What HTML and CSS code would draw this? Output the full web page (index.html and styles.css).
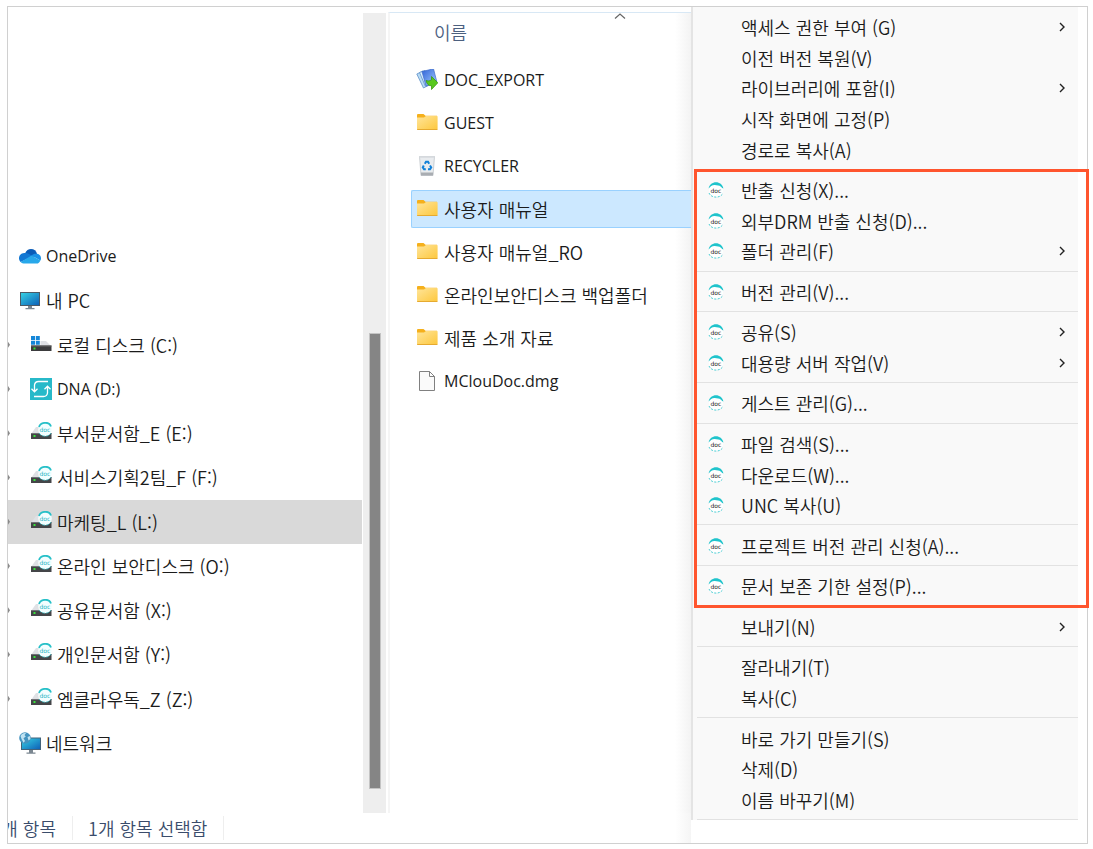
FILE: index.html
```
<!DOCTYPE html>
<html lang="ko">
<head>
    <meta charset="UTF-8">
    <meta name="viewport" content="width=device-width, initial-scale=1.0">
    <title>마케팅_L (L:)</title>
    <link rel="stylesheet" href="styles.css">
</head>
<body>
    <!-- Gradients shared by the icons -->
    <svg class="gradients" aria-hidden="true">
        <defs>
            <linearGradient id="g-screen" x1="0" y1="0" x2="1" y2="1">
                <stop offset="0" stop-color="#35d0e4"/><stop offset="1" stop-color="#0f62b8"/>
            </linearGradient>
            <linearGradient id="g-folder" x1="0" y1="0" x2="1" y2="1">
                <stop offset="0" stop-color="#ffe59a"/><stop offset="1" stop-color="#fdc73c"/>
            </linearGradient>
            <linearGradient id="g-export" x1="0" y1="0" x2="1" y2="1">
                <stop offset="0" stop-color="#2f62d8"/><stop offset="1" stop-color="#a9d0ff"/>
            </linearGradient>
        </defs>
    </svg>

    <!-- Icon set -->
    <svg class="sprite" aria-hidden="true">
        <symbol id="i-onedrive" viewBox="0 0 22 22">
            <path fill="#0a5cb8" d="M6 8.500C7.200 5.300 9.500 4 12 4c3 0 5.300 1.900 6 4.800L13 13z"/>
            <path fill="#1277d3" d="M5.500 8C2.300 8 0 10.300 0 13.200c0 1.500.6 2.800 1.600 3.800L14 11.300 9.500 8.700C8.300 8.100 7 8 5.500 8z"/>
            <path fill="#1a91e6" d="M12.500 10.500c1.500-1.500 3.300-2.100 5.500-1.700 2.400.3 4 2.200 4 4.400 0 .9-.2 1.600-.6 2.200z"/>
            <path fill="#28a8ea" d="M1.600 17c1 1 2.400 1.500 4 1.500h12c1.700 0 3-1 3.800-3.100l-8.900-4.900z"/>
        </symbol>
        <symbol id="i-pc" viewBox="0 0 22 22">
            <path fill="#4c5a66" d="M1 3h20v14H1z"/>
            <path fill="url(#g-screen)" d="M2 4h18v12H2z"/>
            <path fill="#7b8791" d="M9 17h4v2H9zM6.500 19h9v1.200h-9z"/>
        </symbol>
        <symbol id="i-disk" viewBox="0 1 22 22">
            <path fill="#dfe0e5" d="M3 8h13l5 5H1z"/>
            <path fill="#3b3b3d" d="M1 12.500h20.500V18H1z"/>
            <path fill="#666" d="M1 12.500h20.500v1H1z"/>
            <path fill="#35e03b" d="M3.500 14.500h2v2h-2z"/>
            <path fill="#fff" d="M0 2h10.500v10H0z"/>
            <path fill="#1586d8" d="M1 3h4v4H1zM5.800 3h4v4h-4zM1 7.800h4v4H1zM5.800 7.800h4v4h-4z"/>
        </symbol>
        <symbol id="i-dna" viewBox="0 0 22 22">
            <path fill="#27b9c9" d="M0 0h22v22H0z"/>
            <path fill="none" stroke="#fff" stroke-width="1.300" d="M18 3.500H8.500Q5 3.500 4.500 7v7M1.500 10.800l3 3 3-3M4 18.500h9.500q3.500 0 4-3.500V8M14.500 11.200l3-3 3 3"/>
        </symbol>
        <symbol id="i-drive" viewBox="0 1 22 22">
            <path fill="#dfe1e5" d="M6 6h10l5 7H1z"/>
            <path fill="#444548" d="M1 12h20.500v6H1z"/>
            <path fill="#717376" d="M1 12h20.500v1H1z"/>
            <path fill="#39e43c" d="M3.500 14h2v2h-2z"/>
            <circle cx="15" cy="8.500" r="6.800" fill="#f3feff"/>
            <path fill="none" stroke="#27c0c8" stroke-width="1.800" d="M9 6c1.500-5 10-6 12-.5"/>
            <path fill="none" stroke="#27c0c8" stroke-width=".7" stroke-dasharray="3 1" d="M9 12c2 4 10 4.500 12 0"/>
            <text class="badge" x="9.500" y="11" fill="#27b5c4">doc</text>
        </symbol>
        <symbol id="i-network" viewBox="0 0 22 22">
            <path fill="#42627a" d="M2 5.500h20V18H2z"/>
            <path fill="url(#g-screen)" d="M3 6.500h18V17H3z"/>
            <path fill="#7b8791" d="M10 18h4v2.500h-4zM7.500 20.500h9v1.200h-9z"/>
            <circle cx="6" cy="6" r="5.800" fill="#4493bf"/>
            <path fill="#bfe2f1" d="M1.500 4C3 1.500 5 .8 7 1.200L5.500 3l1.300 1.400-2.300 1.800L6 9l-1.500 1.800L2.500 7zM8.500 5l2.500-1 .5 3-2 1.500z"/>
        </symbol>
        <symbol id="i-export" viewBox="0 1 22 22">
            <path fill="#b9dcf5" stroke="#5d8fc9" stroke-width=".8" d="M.8 6L7 3l6 14-5.500 3z"/>
            <path fill="#dceffd" stroke="#5d8fc9" stroke-width=".8" d="M3.500 4.500L9 2.500l6 14-5.500 2z"/>
            <path fill="url(#g-export)" stroke="#3b69c9" stroke-width=".7" d="M6 3.500L17.500.8l3.300 13L10 18z"/>
            <path fill="#58c81e" stroke="#3b9a14" stroke-width=".8" d="M10 12.500q3 1.300 5.500-.6V8.500l6.300 6.300-6.300 6.700v-3.800q-4 .5-5.500-5.200z"/>
        </symbol>
        <symbol id="i-folder" viewBox="0 1 22 22">
            <path fill="#f5b01c" d="M1 4q0-1 1-1h5.500l2 1.800H21V9H1z"/>
            <path fill="url(#g-folder)" d="M1 6.500h7l2-1.500h11q.6 0 .6.600V18q0 .8-.8.800H1.700Q1 18.800 1 18z"/>
            <path fill="#e6aa30" d="M1 18h20.600q0 .9-.8.900H1.700Q1 18.900 1 18z"/>
        </symbol>
        <symbol id="i-bin" viewBox="0 0 22 22">
            <path fill="#e9ecef" stroke="#b9bec4" stroke-width=".7" d="M3.500 1.500h15L17 20.500H5z"/>
            <path fill="#a9adb2" d="M4.800 17.500h12.400l-.3 3H5.100z"/>
            <path fill="#d7dbdf" d="M3.500 1.200h15v1.600h-15z"/>
            <path fill="none" stroke="#1281d8" stroke-width="2" d="M8.800 8.800L10 6.800h2l1.200 2M14 10.500l1.200 2-1.200 1.700h-2M9.800 14.200H8l-1.200-1.700 1-2"/>
        </symbol>
        <symbol id="i-file" viewBox="0 0 22 22">
            <path fill="#fafafa" stroke="#808080" d="M3.500 1.500h10l5 5v14h-15z"/>
            <path fill="#fff" stroke="#808080" d="M13.500 1.500v5h5z"/>
        </symbol>
        <symbol id="i-doc" viewBox="0 0 16 16">
            <circle cx="8" cy="8" r="7" fill="#fff"/>
            <path fill="#20c4cc" d="M.6 6.500C1.500 2.500 4.500.3 8 .3s6.500 2.200 7.400 6.200l-1.200-.6C12.500 3.600 10 3 8 3.200 5 2.300 2.500 4 .6 6.500z"/>
            <path fill="none" stroke="#20c4cc" stroke-width=".8" stroke-dasharray="2 1.400" d="M1 11c2 5.500 12 5.500 14 0"/>
            <text class="badge" x="2.500" y="11" fill="#222">doc</text>
        </symbol>
        <symbol id="i-chevron" viewBox="0 0 8 10">
            <path fill="none" stroke="#222" stroke-width="1.400" d="M2 1l4 4-4 4"/>
        </symbol>
        <symbol id="i-sort" viewBox="0 0 12 6">
            <path fill="none" stroke="#666" stroke-width="1.200" d="M1 5.500l5-4.500 5 4.500"/>
        </symbol>
    </svg>

    <div class="window">
        <!-- Folder tree -->
        <nav class="tree">
            <a class="tree-item latin" href="#"><svg class="icon"><use href="#i-onedrive"/></svg>OneDrive</a>
            <a class="tree-item" href="#"><svg class="icon"><use href="#i-pc"/></svg>내 PC</a>
            <a class="tree-item child" href="#"><svg class="icon"><use href="#i-disk"/></svg>로컬 디스크 (C:)</a>
            <a class="tree-item child latin" href="#"><svg class="icon"><use href="#i-dna"/></svg>DNA (D:)</a>
            <a class="tree-item child" href="#"><svg class="icon"><use href="#i-drive"/></svg>부서문서함_E (E:)</a>
            <a class="tree-item child" href="#"><svg class="icon"><use href="#i-drive"/></svg>서비스기획2팀_F (F:)</a>
            <a class="tree-item child current" href="#"><svg class="icon"><use href="#i-drive"/></svg>마케팅_L (L:)</a>
            <a class="tree-item child" href="#"><svg class="icon"><use href="#i-drive"/></svg>온라인 보안디스크 (O:)</a>
            <a class="tree-item child" href="#"><svg class="icon"><use href="#i-drive"/></svg>공유문서함 (X:)</a>
            <a class="tree-item child" href="#"><svg class="icon"><use href="#i-drive"/></svg>개인문서함 (Y:)</a>
            <a class="tree-item child" href="#"><svg class="icon"><use href="#i-drive"/></svg>엠클라우독_Z (Z:)</a>
            <a class="tree-item" href="#"><svg class="icon"><use href="#i-network"/></svg>네트워크</a>
        </nav>
        <div class="scrollbar"><div class="thumb"></div></div>

        <!-- File list -->
        <main class="files">
            <div class="files-header">
                <button class="sort" type="button">이름</button>
                <svg class="sort-arrow"><use href="#i-sort"/></svg>
            </div>
            <ul class="file-list">
                <li><a class="file latin" href="#"><svg class="icon"><use href="#i-export"/></svg>DOC_EXPORT</a></li>
                <li><a class="file latin" href="#"><svg class="icon"><use href="#i-folder"/></svg>GUEST</a></li>
                <li><a class="file latin" href="#"><svg class="icon"><use href="#i-bin"/></svg>RECYCLER</a></li>
                <li><a class="file selected" href="#"><svg class="icon"><use href="#i-folder"/></svg>사용자 매뉴얼</a></li>
                <li><a class="file" href="#"><svg class="icon"><use href="#i-folder"/></svg>사용자 매뉴얼_RO</a></li>
                <li><a class="file" href="#"><svg class="icon"><use href="#i-folder"/></svg>온라인보안디스크 백업폴더</a></li>
                <li><a class="file" href="#"><svg class="icon"><use href="#i-folder"/></svg>제품 소개 자료</a></li>
                <li><a class="file latin" href="#"><svg class="icon"><use href="#i-file"/></svg>MClouDoc.dmg</a></li>
            </ul>
        </main>

        <footer class="status">
            <span class="status-count">개 항목</span>
            <span class="status-selected">1개 항목 선택함</span>
        </footer>

        <!-- Context menu -->
        <div class="menu">
            <div class="menu-part top">
                <button class="menu-item" type="button">액세스 권한 부여 (G)<svg class="chevron"><use href="#i-chevron"/></svg></button>
                <button class="menu-item" type="button">이전 버전 복원(V)</button>
                <button class="menu-item" type="button">라이브러리에 포함(I)<svg class="chevron"><use href="#i-chevron"/></svg></button>
                <button class="menu-item" type="button">시작 화면에 고정(P)</button>
                <button class="menu-item" type="button">경로로 복사(A)</button>
            </div>
            <div class="menu-part highlight">
                <button class="menu-item with-icon" type="button"><svg class="doc-icon"><use href="#i-doc"/></svg>반출 신청(X)...</button>
                <button class="menu-item with-icon" type="button"><svg class="doc-icon"><use href="#i-doc"/></svg>외부DRM 반출 신청(D)...</button>
                <button class="menu-item with-icon" type="button"><svg class="doc-icon"><use href="#i-doc"/></svg>폴더 관리(F)<svg class="chevron"><use href="#i-chevron"/></svg></button>
                <hr>
                <button class="menu-item with-icon" type="button"><svg class="doc-icon"><use href="#i-doc"/></svg>버전 관리(V)...</button>
                <hr>
                <button class="menu-item with-icon" type="button"><svg class="doc-icon"><use href="#i-doc"/></svg>공유(S)<svg class="chevron"><use href="#i-chevron"/></svg></button>
                <button class="menu-item with-icon" type="button"><svg class="doc-icon"><use href="#i-doc"/></svg>대용량 서버 작업(V)<svg class="chevron"><use href="#i-chevron"/></svg></button>
                <hr>
                <button class="menu-item with-icon" type="button"><svg class="doc-icon"><use href="#i-doc"/></svg>게스트 관리(G)...</button>
                <hr>
                <button class="menu-item with-icon" type="button"><svg class="doc-icon"><use href="#i-doc"/></svg>파일 검색(S)...</button>
                <button class="menu-item with-icon" type="button"><svg class="doc-icon"><use href="#i-doc"/></svg>다운로드(W)...</button>
                <button class="menu-item with-icon" type="button"><svg class="doc-icon"><use href="#i-doc"/></svg>UNC 복사(U)</button>
                <hr>
                <button class="menu-item with-icon" type="button"><svg class="doc-icon"><use href="#i-doc"/></svg>프로젝트 버전 관리 신청(A)...</button>
                <hr>
                <button class="menu-item with-icon" type="button"><svg class="doc-icon"><use href="#i-doc"/></svg>문서 보존 기한 설정(P)...</button>
            </div>
            <div class="menu-part bottom">
                <button class="menu-item" type="button">보내기(N)<svg class="chevron"><use href="#i-chevron"/></svg></button>
                <hr>
                <button class="menu-item" type="button">잘라내기(T)</button>
                <button class="menu-item" type="button">복사(C)</button>
                <hr>
                <button class="menu-item" type="button">바로 가기 만들기(S)</button>
                <button class="menu-item" type="button">삭제(D)</button>
                <button class="menu-item" type="button">이름 바꾸기(M)</button>
            </div>
        </div>
    </div>
</body>
</html>
```
FILE: styles.css
```
* {
    box-sizing: border-box;
}
body {
    margin: 0;
    padding: 6px 5px 5px 7px;
    min-height: 100vh;
    display: flex;
    background-color: #fff;
    color: #1b1b1b;
    font-family: "Noto Sans CJK KR", "Noto Sans", sans-serif;
    font-size: 18px;
    font-weight: 350;
    line-height: 24px;
}
a {
    color: inherit;
    text-decoration: none;
}
button {
    border: none;
    background: none;
    padding: 0;
    color: inherit;
    font: inherit;
    text-align: left;
    cursor: pointer;
}
.gradients {
    position: absolute;
    width: 0;
    height: 0;
}
.sprite {
    display: none;
}
.window {
    flex: 1;
    display: grid;
    grid-template-columns: 355px 23px minmax(0, 1fr) 396px;
    grid-template-rows: 1fr 30px;
    border: 1px solid #d0d0d0;
}
.icon {
    width: 22px;
    height: 22px;
    flex: none;
}
.badge {
    font-family: "DejaVu Sans", sans-serif;
    font-size: 6px;
    font-weight: normal;
}
.latin {
    font-family: "Open Sans", sans-serif;
    font-size: 16px;
    font-weight: 400;
}

/* Folder tree */
.tree {
    display: flex;
    flex-direction: column;
    padding: 227px 1px 48px 0;
}
.tree-item {
    flex: 1 0 40px;
    display: flex;
    align-items: center;
    gap: 5px;
    padding-left: 11px;
}
.tree-item.child {
    padding-left: 0;
}
.tree-item.child::before {
    content: "";
    width: 17px;
    height: 6px;
    background: #8a8a8a;
    clip-path: polygon(0 0, 2px 50%, 0 100%);
}
.tree-item.current {
    background-color: #d9d9d9;
}
.scrollbar {
    margin-top: 6px;
    padding: 0 5px 0 6px;
    background-color: #eee;
    display: grid;
    grid-template-rows: 40fr 57fr 3fr;
}
.thumb {
    grid-row: 2;
    background-color: #858585;
    border: 1px solid #c4c4c4;
}

/* File list */
.files {
    margin-top: 5px;
    margin-left: 2px;
    border-top: 1px solid #d8e8f5;
    border-left: 2px solid #f5f5f5;
    background: linear-gradient(to left, #f3f3f3, #fff 16px);
}
.files-header {
    display: flex;
    align-items: flex-start;
    height: 48px;
    padding-left: 44px;
}
.sort {
    padding-top: 7px;
    color: #4c607f;
}
.sort-arrow {
    width: 12px;
    height: 6px;
    margin-left: 147px;
}
.file-list {
    list-style: none;
    margin: 0;
    padding: 0 0 0 21px;
    display: flex;
    flex-direction: column;
    gap: 5px;
}
.file {
    display: flex;
    align-items: center;
    gap: 6px;
    height: 38px;
    padding-left: 4px;
    border: 1px solid transparent;
}
.file.selected {
    background-color: #cce8ff;
    border-color: #99d1ff;
    border-right: none;
    border-radius: 2px 0 0 2px;
}

/* Status bar */
.status {
    grid-column: 1 / 4;
    display: flex;
    align-items: center;
    color: #3a4c6b;
    background: linear-gradient(to left, #f5f5f5, #fff 16px);
}
.status span {
    display: flex;
    height: 24px;
    align-items: center;
}
.status .status-count {
    width: 65px;
    padding-right: 16px;
    justify-content: flex-end;
    overflow: hidden;
    white-space: nowrap;
    border-right: 1px solid #eee;
}
.status .status-selected {
    padding: 0 16px 0 15px;
    border-right: 1px solid #eee;
}

/* Context menu */
.menu {
    grid-column: 4;
    grid-row: 1 / 3;
    display: flex;
    flex-direction: column;
    margin-bottom: 23px;
    border-left: 2px solid #e4e4e4;
    background: linear-gradient(#f9f9f9, #f9f9f9) no-repeat 0 0 / calc(100% - 9px) 100%;
}
.menu-part {
    display: flex;
    flex-direction: column;
}
.menu-part.top {
    flex: 5 0 auto;
    padding: 5px 9px 4px 4px;
}
.menu-part.highlight {
    flex: 12 0 auto;
    margin: 0 -2px 0 1px;
    padding: 3px 8px 3px 0;
    border: 3px solid #ff552e;
}
.menu-part.bottom {
    flex: 6 0 auto;
    margin: 0 9px 0 4px;
    padding: 4px 0;
    border-bottom: 1px solid #e2e2e2;
}
.menu-item {
    flex: 1 0 30px;
    display: flex;
    align-items: center;
    padding: 0 12px 0 44px;
}
.menu-item.with-icon {
    padding-left: 11px;
}
.doc-icon {
    width: 16px;
    height: 16px;
    margin-right: 17px;
}
.chevron {
    width: 8px;
    height: 10px;
    margin-left: auto;
}
hr {
    width: 100%;
    margin: 4px 0 5px;
    border: none;
    border-top: 1px solid #e2e2e2;
}
```
